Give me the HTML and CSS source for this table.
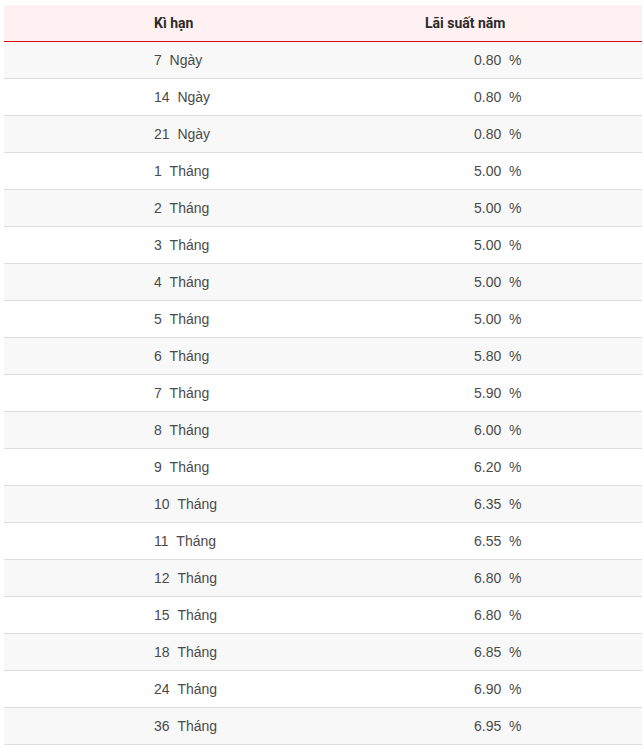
FILE: index.html
```html
<!DOCTYPE html>
<html lang="vi">
<head>
<meta charset="utf-8">
<title>Lãi suất</title>
<link rel="stylesheet" href="styles.css">
</head>
<body>
<div class="wrap">
  <div class="rate-table">
    <div class="row head">
      <div class="cell c1">Kì hạn</div>
      <div class="cell c2">Lãi suất năm</div>
    </div>
    <div class="row"><div class="cell c1"><span class="n">7</span>Ngày</div><div class="cell c2"><span class="n">0.80</span>%</div></div>
    <div class="row"><div class="cell c1"><span class="n">14</span>Ngày</div><div class="cell c2"><span class="n">0.80</span>%</div></div>
    <div class="row"><div class="cell c1"><span class="n">21</span>Ngày</div><div class="cell c2"><span class="n">0.80</span>%</div></div>
    <div class="row"><div class="cell c1"><span class="n">1</span>Tháng</div><div class="cell c2"><span class="n">5.00</span>%</div></div>
    <div class="row"><div class="cell c1"><span class="n">2</span>Tháng</div><div class="cell c2"><span class="n">5.00</span>%</div></div>
    <div class="row"><div class="cell c1"><span class="n">3</span>Tháng</div><div class="cell c2"><span class="n">5.00</span>%</div></div>
    <div class="row"><div class="cell c1"><span class="n">4</span>Tháng</div><div class="cell c2"><span class="n">5.00</span>%</div></div>
    <div class="row"><div class="cell c1"><span class="n">5</span>Tháng</div><div class="cell c2"><span class="n">5.00</span>%</div></div>
    <div class="row"><div class="cell c1"><span class="n">6</span>Tháng</div><div class="cell c2"><span class="n">5.80</span>%</div></div>
    <div class="row"><div class="cell c1"><span class="n">7</span>Tháng</div><div class="cell c2"><span class="n">5.90</span>%</div></div>
    <div class="row"><div class="cell c1"><span class="n">8</span>Tháng</div><div class="cell c2"><span class="n">6.00</span>%</div></div>
    <div class="row"><div class="cell c1"><span class="n">9</span>Tháng</div><div class="cell c2"><span class="n">6.20</span>%</div></div>
    <div class="row"><div class="cell c1"><span class="n">10</span>Tháng</div><div class="cell c2"><span class="n">6.35</span>%</div></div>
    <div class="row"><div class="cell c1"><span class="n">11</span>Tháng</div><div class="cell c2"><span class="n">6.55</span>%</div></div>
    <div class="row"><div class="cell c1"><span class="n">12</span>Tháng</div><div class="cell c2"><span class="n">6.80</span>%</div></div>
    <div class="row"><div class="cell c1"><span class="n">15</span>Tháng</div><div class="cell c2"><span class="n">6.80</span>%</div></div>
    <div class="row"><div class="cell c1"><span class="n">18</span>Tháng</div><div class="cell c2"><span class="n">6.85</span>%</div></div>
    <div class="row"><div class="cell c1"><span class="n">24</span>Tháng</div><div class="cell c2"><span class="n">6.90</span>%</div></div>
    <div class="row"><div class="cell c1"><span class="n">36</span>Tháng</div><div class="cell c2"><span class="n">6.95</span>%</div></div>
  </div>
</div>
</body>
</html>
```

FILE: styles.css
```css
html, body {
  margin: 0;
  padding: 0;
  background: #ffffff;
}

.wrap {
  padding: 5px 1px 0 4px;
}

.rate-table {
  display: flex;
  flex-direction: column;
  font-family: "Liberation Sans", Arial, sans-serif;
  font-size: 14px;
  color: #4a4a4a;
}

.row {
  display: grid;
  grid-template-columns: 319px 1fr;
  height: 36px;
  align-items: center;
  border-bottom: 1px solid #dddddd;
  background: #ffffff;
}

.row:nth-child(even) {
  background: #f8f8f8;
}

.row.head {
  background: #fff1f1;
  border-bottom: 1px solid #d7070f;
  font-family: Roboto, "Noto Sans", sans-serif;
  font-weight: 700;
  color: #2b2b2b;
}

.cell {
  white-space: nowrap;
}

.c1 {
  padding-left: 150px;
}

.c2 {
  padding-left: 151px;
}

.head .c2 {
  padding-left: 102px;
}

.n {
  margin-right: 7.8px;
}
```
